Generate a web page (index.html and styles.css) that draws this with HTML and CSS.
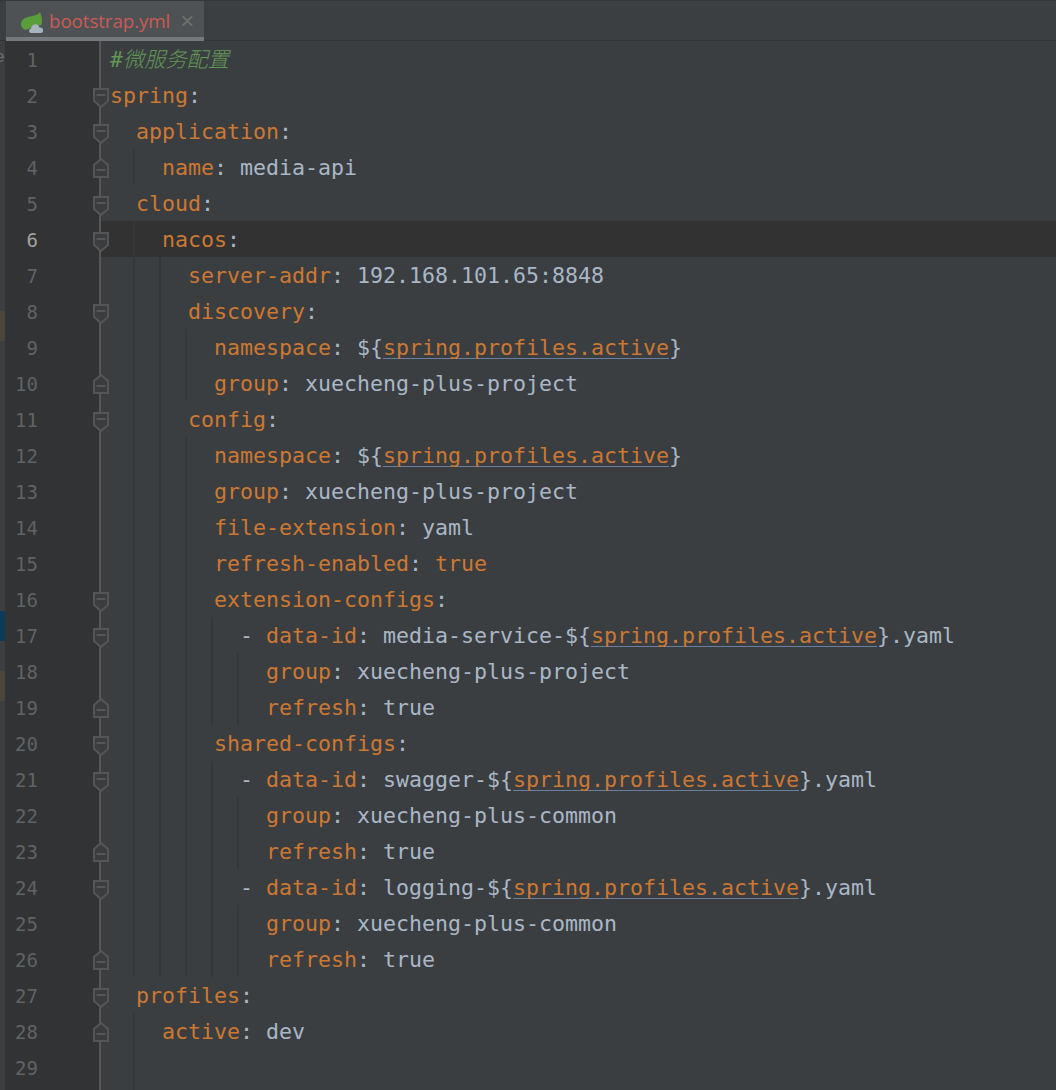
FILE: index.html
```html
<!DOCTYPE html>
<html lang="en">
<head>
<meta charset="utf-8">
<title>bootstrap.yml</title>
<link rel="stylesheet" href="styles.css">
</head>
<body>
<svg class="defs" width="0" height="0" aria-hidden="true">
  <symbol id="fold-start" viewBox="0 0 16 20"><path d="M1 1H15V13L8 19L1 13Z" fill="#3a3c3e" stroke="#535557" stroke-width="2"/><path d="M3.5 7H12.5" stroke="#5f6163" stroke-width="1.5"/></symbol>
  <symbol id="fold-end" viewBox="0 0 16 20"><path d="M1 19H15V7L8 1L1 7Z" fill="#3a3c3e" stroke="#535557" stroke-width="2"/><path d="M3.5 12H12.5" stroke="#5f6163" stroke-width="1.5"/></symbol>
</svg>
<div class="app">
  <div class="tabbar">
    <div class="tab">
      <svg class="spring" viewBox="0 0 24 22" width="24" height="22" aria-hidden="true">
        <path d="M1 11C2 7 5 6 8 5C13 4 18 3 20 0C22 5 22.5 9 21.500 13L12 15C8 18 5 18.500 3 16.500C1 15 1 13 1 11Z" fill="#5a9e3c"/>
        <path d="M11 21C8.500 21 8.500 17 11 16.500C11.500 12 18 10 19.500 15.500C22 15 23.500 17 23 19C23 20 22 21 21 21Z" fill="#a7b3bd"/>
      </svg>
      <span class="tab-name">bootstrap.yml</span>
      <span class="tab-close">×</span>
    </div>
  </div>
  <div class="main">
    <div class="strip">
      <span class="strip-e">e</span>
      <div class="strip-block brown first"></div>
      <div class="strip-block blue"></div>
      <div class="strip-block brown last"></div>
    </div>
    <div class="editor">
      <div class="line"><div class="gutter"><span class="num">1</span></div><div class="code"><span class="cm">#<span class="cjk">微服务配置</span></span></div></div>
      <div class="line"><div class="gutter"><span class="num">2</span><svg class="fm"><use href="#fold-start"/></svg></div><div class="code"><span class="k">spring</span>:</div></div>
      <div class="line"><div class="gutter"><span class="num">3</span><svg class="fm"><use href="#fold-start"/></svg></div><div class="code">  <span class="k">application</span>:</div></div>
      <div class="line"><div class="gutter"><span class="num">4</span><svg class="fm end"><use href="#fold-end"/></svg></div><div class="code"><i class="g g1"></i>    <span class="k">name</span>: media-api</div></div>
      <div class="line"><div class="gutter"><span class="num">5</span><svg class="fm"><use href="#fold-start"/></svg></div><div class="code">  <span class="k">cloud</span>:</div></div>
      <div class="line current"><div class="gutter"><span class="num">6</span><svg class="fm"><use href="#fold-start"/></svg></div><div class="code"><i class="g g1"></i>    <span class="k">nacos</span>:</div></div>
      <div class="line"><div class="gutter"><span class="num">7</span></div><div class="code"><i class="g g1"></i><i class="g g2"></i>      <span class="k">server-addr</span>: 192.168.101.65:8848</div></div>
      <div class="line"><div class="gutter"><span class="num">8</span><svg class="fm"><use href="#fold-start"/></svg></div><div class="code"><i class="g g1"></i><i class="g g2"></i>      <span class="k">discovery</span>:</div></div>
      <div class="line"><div class="gutter"><span class="num">9</span></div><div class="code"><i class="g g1"></i><i class="g g2"></i><i class="g g3"></i>        <span class="k">namespace</span>: ${<span class="ref">spring.profiles.active</span>}</div></div>
      <div class="line"><div class="gutter"><span class="num">10</span><svg class="fm end"><use href="#fold-end"/></svg></div><div class="code"><i class="g g1"></i><i class="g g2"></i><i class="g g3"></i>        <span class="k">group</span>: xuecheng-plus-project</div></div>
      <div class="line"><div class="gutter"><span class="num">11</span><svg class="fm"><use href="#fold-start"/></svg></div><div class="code"><i class="g g1"></i><i class="g g2"></i>      <span class="k">config</span>:</div></div>
      <div class="line"><div class="gutter"><span class="num">12</span></div><div class="code"><i class="g g1"></i><i class="g g2"></i><i class="g g3"></i>        <span class="k">namespace</span>: ${<span class="ref">spring.profiles.active</span>}</div></div>
      <div class="line"><div class="gutter"><span class="num">13</span></div><div class="code"><i class="g g1"></i><i class="g g2"></i><i class="g g3"></i>        <span class="k">group</span>: xuecheng-plus-project</div></div>
      <div class="line"><div class="gutter"><span class="num">14</span></div><div class="code"><i class="g g1"></i><i class="g g2"></i><i class="g g3"></i>        <span class="k">file-extension</span>: yaml</div></div>
      <div class="line"><div class="gutter"><span class="num">15</span></div><div class="code"><i class="g g1"></i><i class="g g2"></i><i class="g g3"></i>        <span class="k">refresh-enabled</span>: <span class="k">true</span></div></div>
      <div class="line"><div class="gutter"><span class="num">16</span><svg class="fm"><use href="#fold-start"/></svg></div><div class="code"><i class="g g1"></i><i class="g g2"></i><i class="g g3"></i>        <span class="k">extension-configs</span>:</div></div>
      <div class="line"><div class="gutter"><span class="num">17</span><svg class="fm"><use href="#fold-start"/></svg></div><div class="code"><i class="g g1"></i><i class="g g2"></i><i class="g g3"></i><i class="g g4"></i>          - <span class="k">data-id</span>: media-service-${<span class="ref">spring.profiles.active</span>}.yaml</div></div>
      <div class="line"><div class="gutter"><span class="num">18</span></div><div class="code"><i class="g g1"></i><i class="g g2"></i><i class="g g3"></i><i class="g g4"></i><i class="g g5"></i>            <span class="k">group</span>: xuecheng-plus-project</div></div>
      <div class="line"><div class="gutter"><span class="num">19</span><svg class="fm end"><use href="#fold-end"/></svg></div><div class="code"><i class="g g1"></i><i class="g g2"></i><i class="g g3"></i><i class="g g4"></i><i class="g g5"></i>            <span class="k">refresh</span>: true</div></div>
      <div class="line"><div class="gutter"><span class="num">20</span><svg class="fm"><use href="#fold-start"/></svg></div><div class="code"><i class="g g1"></i><i class="g g2"></i><i class="g g3"></i>        <span class="k">shared-configs</span>:</div></div>
      <div class="line"><div class="gutter"><span class="num">21</span><svg class="fm"><use href="#fold-start"/></svg></div><div class="code"><i class="g g1"></i><i class="g g2"></i><i class="g g3"></i><i class="g g4"></i>          - <span class="k">data-id</span>: swagger-${<span class="ref">spring.profiles.active</span>}.yaml</div></div>
      <div class="line"><div class="gutter"><span class="num">22</span></div><div class="code"><i class="g g1"></i><i class="g g2"></i><i class="g g3"></i><i class="g g4"></i><i class="g g5"></i>            <span class="k">group</span>: xuecheng-plus-common</div></div>
      <div class="line"><div class="gutter"><span class="num">23</span><svg class="fm end"><use href="#fold-end"/></svg></div><div class="code"><i class="g g1"></i><i class="g g2"></i><i class="g g3"></i><i class="g g4"></i><i class="g g5"></i>            <span class="k">refresh</span>: true</div></div>
      <div class="line"><div class="gutter"><span class="num">24</span><svg class="fm"><use href="#fold-start"/></svg></div><div class="code"><i class="g g1"></i><i class="g g2"></i><i class="g g3"></i><i class="g g4"></i>          - <span class="k">data-id</span>: logging-${<span class="ref">spring.profiles.active</span>}.yaml</div></div>
      <div class="line"><div class="gutter"><span class="num">25</span></div><div class="code"><i class="g g1"></i><i class="g g2"></i><i class="g g3"></i><i class="g g4"></i><i class="g g5"></i>            <span class="k">group</span>: xuecheng-plus-common</div></div>
      <div class="line"><div class="gutter"><span class="num">26</span><svg class="fm end"><use href="#fold-end"/></svg></div><div class="code"><i class="g g1"></i><i class="g g2"></i><i class="g g3"></i><i class="g g4"></i><i class="g g5"></i>            <span class="k">refresh</span>: true</div></div>
      <div class="line"><div class="gutter"><span class="num">27</span><svg class="fm"><use href="#fold-start"/></svg></div><div class="code">  <span class="k">profiles</span>:</div></div>
      <div class="line"><div class="gutter"><span class="num">28</span><svg class="fm end"><use href="#fold-end"/></svg></div><div class="code"><i class="g g1"></i>    <span class="k">active</span>: dev</div></div>
      <div class="line"><div class="gutter"><span class="num">29</span></div><div class="code"><i class="g g1"></i></div></div>
      <div class="line"><div class="gutter"></div><div class="code"><i class="g g1"></i></div></div>
    </div>
  </div>
</div>
</body>
</html>
```
FILE: styles.css
```css
html, body {
  margin: 0;
  height: 1090px;
  overflow: hidden;
  background: #3b3e41;
}
.defs { position: absolute; }
.app {
  display: flex;
  flex-direction: column;
  height: 1090px;
  overflow: hidden;
}

/* tab bar */
.tabbar {
  display: flex;
  box-sizing: border-box;
  height: 41px;
  padding: 0 0 0 6px;
  background: #3c3f41;
  border-top: 1px solid #353739;
  border-bottom: 1px solid #323436;
}
.tab {
  box-sizing: border-box;
  display: flex;
  align-items: center;
  width: 198px;
  height: 40px;
  margin-bottom: -1px;
  padding: 3px 0 0 14px;
  background: #4e5254;
  border-bottom: 4px solid #767a7e;
  position: relative;
}
.spring { flex: none; margin-top: 5px; }
.tab-name {
  margin-left: 5px;
  font: 18.8px "Open Sans", sans-serif;
  color: #cb5a54;
  letter-spacing: -0.1px;
}
.tab-close {
  margin-left: 10px;
  font: 24px "Liberation Sans", sans-serif;
  color: #6e7173;
}

/* left strip */
.main { display: flex; flex: 1; min-height: 0; }
.strip {
  position: relative;
  flex: none;
  width: 5px;
  overflow: hidden;
  background: #3c3f41;
  display: flex;
  flex-direction: column;
}
.strip-e {
  position: absolute;
  left: -5px;
  top: 6px;
  font: 17px "Liberation Sans", sans-serif;
  color: #6f6f6f;
}
.strip-block { height: 30px; }
.strip-block.first { margin-top: 270px; }
.strip-block.blue { margin-top: 270px; background: #0d3a58; }
.strip-block.last { margin-top: 30px; }
.brown { background: #4a4639; }

/* editor */
.editor { flex: 1; min-width: 0; }
.line { display: flex; height: 36px; position: relative; }
.gutter {
  box-sizing: border-box;
  flex: none;
  width: 96px;
  background: #313335;
  border-right: 2px solid #555759;
}
.num {
  display: block;
  width: 33px;
  text-align: right;
  font: 19px/39px "DejaVu Sans Mono", monospace;
  color: #5f6366;
}
.current .num { color: #a4a3a3; }
.fm {
  position: absolute;
  z-index: 1;
  left: 88px;
  top: 11px;
  width: 16px;
  height: 20px;
}
.fm.end { top: 9px; }
.code {
  position: relative;
  flex: 1;
  padding-left: 9px;
  white-space: pre;
  font: 21.6px/38.5px "DejaVu Sans Mono", monospace;
  color: #a9b7c6;
  height: 36px;
}
.current .code { background: #323232; }
.k { color: #cc7832; }
.cm { color: #629755; font-style: italic; }
.cjk { font-family: "Noto Sans CJK SC", sans-serif; font-size: 21.2px; font-weight: 300; line-height: 1; }
.ref {
  color: #cc7832;
  text-decoration: underline;
  text-decoration-color: #6a7f9e;
  text-decoration-thickness: 1px;
  text-decoration-skip-ink: none;
  text-underline-offset: 3px;
}
.g {
  position: absolute;
  top: 0;
  bottom: 0;
  width: 2px;
  background: #343638;
}
.g1 { left: 32px; }
.g2 { left: 58px; }
.g3 { left: 84px; }
.g4 { left: 110px; }
.g5 { left: 136px; }
```
